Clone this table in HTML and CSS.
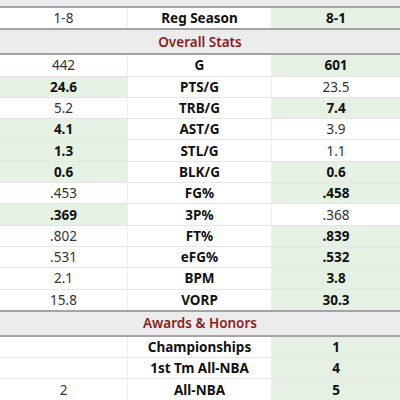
FILE: index.html
```html
<!DOCTYPE html>
<html lang="en">
<head>
<meta charset="UTF-8" />
<meta name="viewport" content="width=device-width,initial-scale=1" />
<title>Player Comparison</title>
<link rel="stylesheet" href="styles.css">
</head>
<body>
<div class="compare">
  <div class="top-strip"></div>
  <div class="row"><div class="cell">1-8</div><div class="cell label">Reg Season</div><div class="cell win">8-1</div></div>

  <div class="section">Overall Stats</div>
  <div class="row"><div class="cell">442</div><div class="cell label">G</div><div class="cell win">601</div></div>
  <div class="row"><div class="cell win">24.6</div><div class="cell label">PTS/G</div><div class="cell">23.5</div></div>
  <div class="row"><div class="cell">5.2</div><div class="cell label">TRB/G</div><div class="cell win">7.4</div></div>
  <div class="row"><div class="cell win">4.1</div><div class="cell label">AST/G</div><div class="cell">3.9</div></div>
  <div class="row"><div class="cell win">1.3</div><div class="cell label">STL/G</div><div class="cell">1.1</div></div>
  <div class="row"><div class="cell win">0.6</div><div class="cell label">BLK/G</div><div class="cell win">0.6</div></div>
  <div class="row"><div class="cell">.453</div><div class="cell label">FG%</div><div class="cell win">.458</div></div>
  <div class="row"><div class="cell win">.369</div><div class="cell label">3P%</div><div class="cell">.368</div></div>
  <div class="row"><div class="cell">.802</div><div class="cell label">FT%</div><div class="cell win">.839</div></div>
  <div class="row"><div class="cell">.531</div><div class="cell label">eFG%</div><div class="cell win">.532</div></div>
  <div class="row"><div class="cell">2.1</div><div class="cell label">BPM</div><div class="cell win">3.8</div></div>
  <div class="row"><div class="cell">15.8</div><div class="cell label">VORP</div><div class="cell win">30.3</div></div>

  <div class="section">Awards &amp; Honors</div>
  <div class="row"><div class="cell"></div><div class="cell label">Championships</div><div class="cell win">1</div></div>
  <div class="row"><div class="cell"></div><div class="cell label">1st Tm All-NBA</div><div class="cell win">4</div></div>
  <div class="row"><div class="cell">2</div><div class="cell label">All-NBA</div><div class="cell win">5</div></div>
</div>
</body>
</html>
```

FILE: styles.css
```css
* {
  box-sizing: border-box;
}
body {
  margin: 0;
  background: #fff;
  font-family: "Noto Sans", Roboto, sans-serif;
  font-size: 13.5px;
  color: #333;
  overflow: hidden;
}
.compare {
  width: 400px;
}
.top-strip {
  height: 8px;
  background: #ececec;
  border-bottom: 2px solid #a3a3a3;
}
.row {
  display: grid;
  grid-template-columns: 128px 144px 128px;
  height: 21.3px;
  border-bottom: 1px solid #e6e6e6;
}
.cell {
  display: flex;
  align-items: center;
  justify-content: center;
  border-right: 1px solid #ededed;
}
.cell:last-child {
  border-right: none;
}
.label {
  font-weight: 700;
  color: #111;
}
.win {
  background: #e5f1e3;
  font-weight: 700;
  color: #111;
}
.section {
  height: 27px;
  display: flex;
  align-items: center;
  justify-content: center;
  background: #ececec;
  border-top: 2px solid #a3a3a3;
  border-bottom: 2px solid #a3a3a3;
  color: #8b1c1c;
  font-weight: 600;
  margin-top: -1px;
}
```
